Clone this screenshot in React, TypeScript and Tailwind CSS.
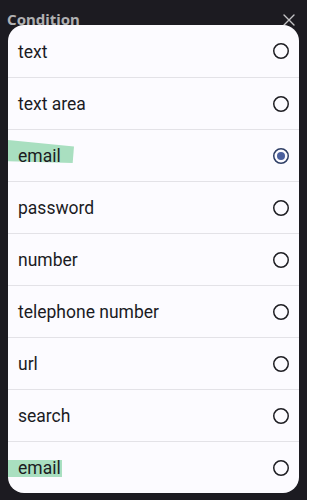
import { useState } from "react";

const OPTIONS = [
  "text",
  "text area",
  "email",
  "password",
  "number",
  "telephone number",
  "url",
  "search",
  "email",
];

function Radio({ checked }: { checked: boolean }) {
  return (
    <svg width="18" height="18" viewBox="0 0 18 18" className="shrink-0">
      <circle
        cx="9"
        cy="9"
        r="7.25"
        fill="none"
        stroke={checked ? "#2f3f66" : "#1f1f24"}
        strokeWidth="1.5"
      />
      {checked && <circle cx="9" cy="9" r="4" fill="#4a5f9e" />}
    </svg>
  );
}

export default function App() {
  const [selected, setSelected] = useState(2);

  return (
    <div className="relative h-[500px] w-[307px] overflow-hidden bg-[#1c1b21] font-['Roboto',sans-serif]">
      {/* Header behind the sheet */}
      <div className="flex h-[25px] items-start justify-between pl-[7px] pr-[12px] pt-[9px]">
        <span className="font-['Noto_Sans',sans-serif] text-[15px] font-bold leading-[20px] text-[#b0b0b2]">
          Condition
        </span>
        <svg width="12" height="12" viewBox="0 0 12 12" className="mt-[5px]">
          <path
            d="M1 1 L11 11 M11 1 L1 11"
            stroke="#c4c4c6"
            strokeWidth="1.4"
            strokeLinecap="round"
          />
        </svg>
      </div>

      {/* Option sheet */}
      <div className="relative z-10 mx-[8px] overflow-hidden rounded-[16px] bg-[#fcfbff]">
        {OPTIONS.map((label, i) => (
          <button
            key={i}
            onClick={() => setSelected(i)}
            className={`relative flex h-[52px] w-full items-center justify-between pl-[10px] pr-[9px] text-left ${
              i > 0 ? "border-t border-[#e3e2e7]" : ""
            }`}
          >
            {i === 2 && (
              <span className="absolute left-0 top-[10px] h-[23px] w-[66px] bg-[#a9dfc0] [clip-path:polygon(0_0,100%_28%,98%_100%,0_92%)]" />
            )}
            {i === 8 && (
              <span className="absolute left-0 top-[18px] h-[17px] w-[54px] bg-[#a9dfc0]" />
            )}
            <span className="relative mt-[1px] text-[17.5px] leading-[22px] text-[#1b1b1f]">
              {label}
            </span>
            <Radio checked={selected === i} />
          </button>
        ))}
      </div>
    </div>
  );
}
